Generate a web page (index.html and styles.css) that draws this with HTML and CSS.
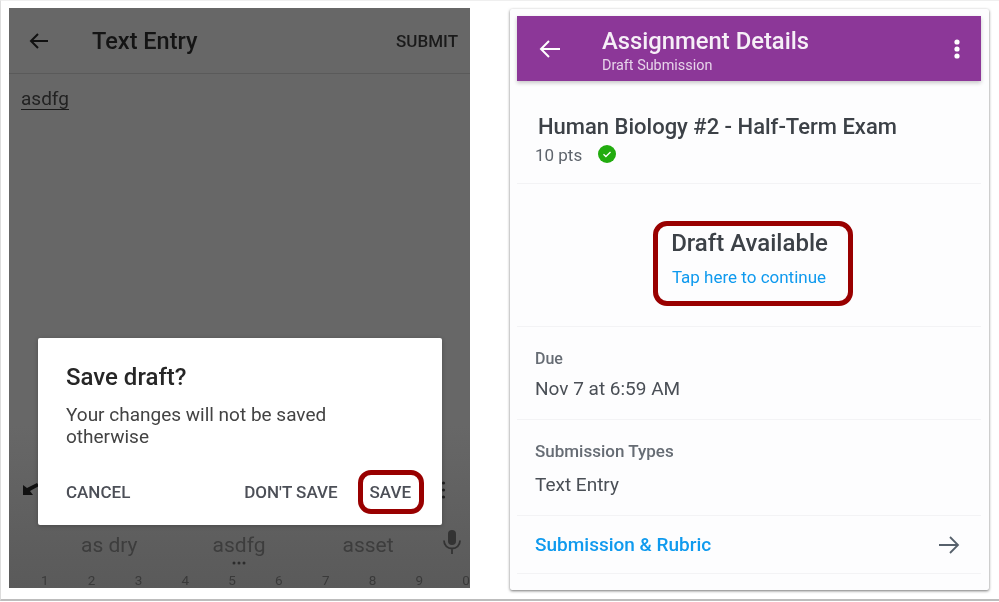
FILE: index.html
```html
<!DOCTYPE html>
<html lang="en">
<head>
<meta charset="utf-8">
<title>Save draft</title>
<link rel="stylesheet" href="styles.css">
</head>
<body>
<div class="frame">
  <section class="phone">
    <header class="phone-bar">
      <svg class="phone-back" width="24" height="24" viewBox="0 0 24 24"><path d="M21 12H4M11 5l-7 7 7 7" fill="none" stroke="#111" stroke-width="2"/></svg>
      <h1 class="phone-title">Text Entry</h1>
      <span class="phone-submit">SUBMIT</span>
    </header>
    <div class="editor"><span class="editor-word">asdfg</span></div>
    <div class="keyboard">
      <div class="kb-tools">
        <svg class="kb-undo" width="18" height="14" viewBox="0 0 18 14"><path d="M0 13V3l4 3 10-5 2 3-9 5 3 4z" fill="#111"/></svg>
        <svg width="5" height="18" viewBox="0 0 5 18"><circle cx="2.500" cy="2" r="1.600" fill="#222"/><circle cx="2.500" cy="9" r="1.600" fill="#222"/><circle cx="2.500" cy="16" r="1.600" fill="#222"/></svg>
      </div>
      <div class="kb-suggest">
        <span class="kb-word w1">as dry</span>
        <span class="kb-word w2">asdfg</span>
        <span class="kb-word w3">asset</span>
        <svg class="kb-mic" width="18" height="24" viewBox="0 0 18 24"><rect x="5" y="0" width="8" height="15" rx="4" fill="#333"/><path d="M1 10.500c0 5 3.500 8 8 8s8-3 8-8M9 18v6" fill="none" stroke="#333" stroke-width="1.800"/></svg>
      </div>
      <div class="kb-dots"><svg width="16" height="4" viewBox="0 0 16 4"><circle cx="3" cy="2" r="1.500" fill="#2c2c2c"/><circle cx="8" cy="2" r="1.500" fill="#2c2c2c"/><circle cx="13" cy="2" r="1.500" fill="#2c2c2c"/></svg></div>
      <div class="kb-nums"><span>1</span><span>2</span><span>3</span><span>4</span><span>5</span><span>6</span><span>7</span><span>8</span><span>9</span><span>0</span></div>
    </div>
    <div class="dialog">
      <h2 class="dialog-title">Save draft?</h2>
      <p class="dialog-text">Your changes will not be saved otherwise</p>
      <div class="dialog-actions">
        <span class="action">CANCEL</span>
        <span class="action action-push">DON'T SAVE</span>
        <span class="action action-save"><span class="action">SAVE</span><span class="ring ring-save"></span></span>
      </div>
    </div>
  </section>

  <section class="card">
    <header class="app-bar">
      <svg class="app-back" width="24" height="24" viewBox="0 0 24 24"><path d="M22 12H3M11 4l-8 8 8 8" fill="none" stroke="#fff" stroke-width="2"/></svg>
      <div class="app-titles">
        <div class="app-title">Assignment Details</div>
        <div class="app-sub">Draft Submission</div>
      </div>
      <svg class="app-more" width="6" height="20" viewBox="0 0 6 20"><circle cx="3" cy="3" r="2.600" fill="#fff"/><circle cx="3" cy="10" r="2.600" fill="#fff"/><circle cx="3" cy="17" r="2.600" fill="#fff"/></svg>
    </header>
    <div class="row row-head">
      <div class="assign-name">Human Biology #2 - Half-Term Exam</div>
      <div class="assign-meta">
        <span class="pts">10 pts</span>
        <svg class="assign-check" width="18" height="18" viewBox="0 0 18 18"><circle cx="9" cy="9" r="9" fill="#22ac0f"/><path d="M5.500 9.200l2.400 2.300 4.600-4.500" fill="none" stroke="#fff" stroke-width="1.300"/></svg>
      </div>
    </div>
    <div class="row row-draft">
      <div class="draft-title">Draft Available</div>
      <div class="draft-link">Tap here to continue</div>
      <span class="ring ring-draft"></span>
    </div>
    <div class="row row-due">
      <div class="label">Due</div>
      <div class="value">Nov 7 at 6:59 AM</div>
    </div>
    <div class="row row-types">
      <div class="label">Submission Types</div>
      <div class="value">Text Entry</div>
    </div>
    <div class="row row-link">
      <span class="rubric">Submission &amp; Rubric</span>
      <svg width="22" height="20" viewBox="0 0 22 20"><path d="M1 10h19M12 2l8 8-8 8" fill="none" stroke="#56606b" stroke-width="1.800"/></svg>
    </div>
  </section>
</div>
</body>
</html>
```
FILE: styles.css
```css
* { box-sizing: border-box; }
html, body { margin: 0; padding: 0; background: #fff; }
body { width: 999px; height: 602px; overflow: hidden; font-family: Roboto, "Liberation Sans", sans-serif; }
h1, h2, p { margin: 0; font-weight: 400; }

.frame {
  width: 999px; height: 601px;
  border-left: 1px solid #dcdcdc;
  border-bottom: 2px solid #bdbdbd;
  border-top: 1px solid #efefef;
  padding: 7px 0 0 8px;
  display: flex; align-items: flex-start;
}

/* the reference is a frame of a video: its text is slightly soft */
.phone-title, .phone-submit, .editor-word, .kb-word, .kb-nums, .kb-mic,
.dialog-title, .dialog-text, .action,
.app-title, .app-sub, .assign-name, .pts, .draft-title, .draft-link, .label, .value, .rubric {
  filter: blur(.35px);
}
.action-save { filter: none; }

.phone {
  position: relative;
  width: 461px; height: 580px;
  background: linear-gradient(#676767 0, #676767 72%, #5a5a5a 100%);
  display: flex; flex-direction: column;
  color: #111;
}
.phone-bar {
  height: 66px; flex: none;
  display: flex; align-items: center;
  padding: 0 12px 0 18px;
  border-bottom: 1px solid #5a5a5a;
}
.phone-back { flex: none; }
.phone-title { margin-left: 41px; font-size: 23.500px; font-weight: 500; color: #141414; flex: 1; }
.phone-submit { font-size: 17px; font-weight: 500; color: #1a1a1a; }
.editor { padding: 13px 12px 0; flex: 1; font-size: 19px; color: #222; }
.editor-word { display: inline-block; border-bottom: 1px solid #1a1a1a; line-height: 21px; height: 22px; }

.keyboard { flex: none; height: 120px; display: flex; flex-direction: column; }
.kb-tools { height: 44px; display: flex; justify-content: space-between; align-items: center; padding: 0 24px 0 14px; }
.kb-undo { margin-top: -2px; }
.kb-suggest { height: 36px; margin-top: 15px; display: flex; align-items: center; }
.kb-word { font-size: 21px; color: #3d3d3d; }
.w1 { margin-left: 72px; }
.w2 { margin-left: 75px; }
.w3 { margin-left: 77px; }
.kb-mic { margin-left: 49px; margin-bottom: 7px; }
.kb-dots { height: 10px; margin-top: -5px; display: flex; align-items: center; justify-content: center; margin-left: -2px; }
.kb-nums { height: 20px; display: flex; justify-content: space-between; padding: 4px 0 0 32px; font-size: 13.500px; color: #3a3a3a; }

.dialog {
  position: absolute; left: 29px; top: 330px;
  width: 404px; height: 187px;
  background: #fff;
  border-radius: 2px;
  padding: 26px 16px 0 28px;
  box-shadow: 0 1px 4px rgba(0,0,0,.25);
}
.dialog-title { font-size: 24px; font-weight: 500; color: #262626; line-height: 26px; margin-bottom: 14px; }
.dialog-text { font-size: 19px; line-height: 22px; color: #434343; width: 300px; }
.dialog-actions { display: flex; align-items: center; margin-top: 34px; font-size: 17px; font-weight: 500; color: #4c4f57; }
.action-push { margin-left: auto; }
.action-save { position: relative; margin-left: 32px; margin-right: 15px; }

.ring { position: absolute; border: 5px solid #990000; border-radius: 13px; }
.ring-save { left: -12px; top: -12px; width: 66px; height: 44px; }
.ring-draft { left: 136px; top: 37px; width: 200px; height: 85px; border-radius: 14px; }

.card {
  margin-left: 40px; margin-top: 1px;
  width: 479px; height: 581px;
  background: #fdfdfe;
  padding: 7px 8px 0 7px;
  border-radius: 2px;
  box-shadow: 0 1px 3px rgba(0,0,0,.55);
  display: flex; flex-direction: column;
}
.app-bar {
  height: 65px; flex: none;
  background: #8c3798;
  color: #fff;
  display: flex; align-items: center;
  padding: 0 21px 0 21px;
  box-shadow: 0 2px 4px rgba(0,0,0,.22);
}
.app-titles { margin-left: 40px; flex: 1; margin-top: 3px; }
.app-title { font-size: 23.800px; font-weight: 500; line-height: 30px; color: #f6eff7; }
.app-sub { font-size: 14.400px; line-height: 18px; color: #e6d3e9; margin-top: 1px; }

.row { border-bottom: 1px solid #f3f3f5; flex: none; position: relative; }
.row-head { height: 103px; padding: 33px 0 0 21px; }
.assign-name { font-size: 22px; font-weight: 500; line-height: 26px; color: #3c4147; }
.assign-meta { display: flex; align-items: center; margin-top: 5px; margin-left: -3px; gap: 16px; }
.assign-check { margin-top: -2px; }
.pts { font-size: 17px; color: #5f656d; }
.row-draft { height: 143px; padding-top: 45px; text-align: center; }
.draft-title { font-size: 24px; font-weight: 500; line-height: 28px; color: #3c4147; margin-left: 1px; }
.draft-link { font-size: 17px; line-height: 20px; color: #0f9aee; margin-top: 10px; }
.row-due { height: 93px; padding: 22px 0 0 18px; }
.row-types { height: 96px; padding: 21px 0 0 18px; }
.label { font-size: 16px; font-weight: 500; line-height: 20px; color: #666c74; }
.row-types .label { font-size: 17px; }
.value { font-size: 19px; line-height: 24px; color: #4a4f56; margin-top: 8px; }
.row-types .value { margin-top: 12px; }
.row-link { height: 58px; display: flex; align-items: center; justify-content: space-between; padding: 0 21px 0 18px; }
.rubric { font-size: 19px; font-weight: 500; color: #0f9aee; }
```
